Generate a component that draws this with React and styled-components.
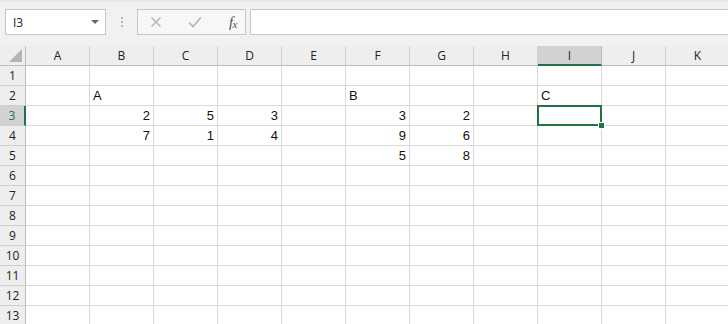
import React from "react";
import styled, { createGlobalStyle } from "styled-components";

const COLS = ["A", "B", "C", "D", "E", "F", "G", "H", "I", "J", "K"];
const ROWS = 13;
const SEL = { col: "I", row: 3 };

const DATA = {
  B2: { v: "A" },
  F2: { v: "B" },
  I2: { v: "C" },
  B3: { v: 2, num: true },
  C3: { v: 5, num: true },
  D3: { v: 3, num: true },
  B4: { v: 7, num: true },
  C4: { v: 1, num: true },
  D4: { v: 4, num: true },
  F3: { v: 3, num: true },
  G3: { v: 2, num: true },
  F4: { v: 9, num: true },
  G4: { v: 6, num: true },
  F5: { v: 5, num: true },
  G5: { v: 8, num: true },
};

const Global = createGlobalStyle`
  html, body {
    margin: 0;
    padding: 0;
    background: #ffffff;
    overflow: hidden;
  }
`;

const Page = styled.div`
  width: 728px;
  height: 324px;
  overflow: hidden;
  font-family: "Open Sans", "Liberation Sans", sans-serif;
`;

const FormulaBar = styled.div`
  height: 46px;
  box-sizing: border-box;
  padding: 9px 0 11px 5px;
  display: flex;
  align-items: stretch;
  background: linear-gradient(#e4e4e4 0, #f1f1f1 3px, #f1f1f1 100%);
`;

const NameBox = styled.div`
  width: 101px;
  box-sizing: border-box;
  background: #fff;
  border: 1px solid #c6c6c6;
  display: flex;
  align-items: center;
  justify-content: space-between;
  padding: 0 6px 0 7px;
  font-size: 12px;
  color: #222;
`;

const Caret = styled.span`
  width: 0;
  height: 0;
  border-left: 4px solid transparent;
  border-right: 4px solid transparent;
  border-top: 4px solid #6a6a6a;
`;

const Grip = styled.div`
  width: 31px;
  display: flex;
  flex-direction: column;
  align-items: center;
  justify-content: center;
  gap: 2px;
  & span {
    width: 2px;
    height: 2px;
    background: #b5b5b5;
  }
`;

const Buttons = styled.div`
  width: 109px;
  box-sizing: border-box;
  background: #f7f7f7;
  border: 1px solid #c6c6c6;
  display: flex;
  align-items: center;
  padding: 0 8px 0 12px;
  justify-content: space-between;
`;

const Fx = styled.span`
  font-family: "Liberation Serif", "DejaVu Serif", serif;
  font-style: italic;
  font-size: 15px;
  color: #555;
  letter-spacing: -0.5px;
  & sub {
    font-size: 11px;
    vertical-align: -1px;
  }
`;

const FormulaInput = styled.div`
  flex: 1;
  margin-left: 4px;
  background: #fff;
  border: 1px solid #c6c6c6;
  border-right: none;
`;

const Grid = styled.div`
  display: grid;
  grid-template-columns: 26px repeat(${COLS.length}, 64px);
  grid-auto-rows: 20px;
`;

const Corner = styled.div`
  background: #eeeeee;
  border-right: 1px solid #bfbfbf;
  border-bottom: 1px solid #bfbfbf;
  box-sizing: border-box;
  display: flex;
  align-items: flex-end;
  justify-content: flex-end;
  padding: 0 3px 3px 0;
`;

const ColHead = styled.div`
  box-sizing: border-box;
  background: ${(p) => (p.$sel ? "#d2d2d2" : "#eeeeee")};
  border-right: 1px solid ${(p) => (p.$sel ? "#bdbdbd" : "#d0d0d0")};
  border-bottom: ${(p) => (p.$sel ? "2px solid #217346" : "1px solid #bfbfbf")};
  display: flex;
  align-items: center;
  justify-content: center;
  font-size: 12px;
  color: #222;
  padding-top: ${(p) => (p.$sel ? "1px" : "0")};
`;

const RowHead = styled.div`
  box-sizing: border-box;
  background: ${(p) => (p.$sel ? "#d2d2d2" : "#eeeeee")};
  border-right: ${(p) => (p.$sel ? "2px solid #217346" : "1px solid #bfbfbf")};
  border-bottom: 1px solid #d0d0d0;
  display: flex;
  align-items: center;
  justify-content: center;
  font-size: 12px;
  color: ${(p) => (p.$sel ? "#217346" : "#222")};
`;

const Cell = styled.div`
  position: relative;
  box-sizing: border-box;
  border-right: 1px solid #d9d9d9;
  border-bottom: 1px solid #d9d9d9;
  font-family: "Liberation Sans", "Open Sans", sans-serif;
  font-size: 13px;
  color: #111;
  display: flex;
  align-items: flex-end;
  justify-content: ${(p) => (p.$num ? "flex-end" : "flex-start")};
  padding: 0 3px 2px 3px;
  ${(p) =>
    p.$sel &&
    `
    &::after {
      content: "";
      position: absolute;
      left: -1px;
      top: -1px;
      right: -1px;
      bottom: -1px;
      border: 2px solid #217346;
    }
    &::before {
      content: "";
      position: absolute;
      right: -4px;
      bottom: -4px;
      width: 5px;
      height: 5px;
      background: #217346;
      border: 1px solid #fff;
      z-index: 2;
    }
  `}
`;

export default function App() {
  const rows = Array.from({ length: ROWS }, (_, i) => i + 1);
  return (
    <Page>
      <Global />
      <FormulaBar>
        <NameBox>
          <span>I3</span>
          <Caret />
        </NameBox>
        <Grip>
          <span />
          <span />
          <span />
        </Grip>
        <Buttons>
          <svg width="12" height="12" viewBox="0 0 12 12">
            <path d="M1.5 1.5 L10.5 10.5 M10.5 1.5 L1.5 10.5" stroke="#b4b4b4" strokeWidth="1.4" fill="none" />
          </svg>
          <svg width="14" height="12" viewBox="0 0 14 12">
            <path d="M1 6.5 L5 10.5 L13 1.5" stroke="#b4b4b4" strokeWidth="1.6" fill="none" />
          </svg>
          <Fx>
            f<sub>x</sub>
          </Fx>
        </Buttons>
        <FormulaInput />
      </FormulaBar>
      <Grid>
        <Corner>
          <svg width="13" height="13" viewBox="0 0 13 13">
            <path d="M13 0 L13 13 L0 13 Z" fill="#b4b4b4" />
          </svg>
        </Corner>
        {COLS.map((c) => (
          <ColHead key={c} $sel={c === SEL.col}>
            {c}
          </ColHead>
        ))}
        {rows.map((r) => (
          <React.Fragment key={r}>
            <RowHead $sel={r === SEL.row}>{r}</RowHead>
            {COLS.map((c) => {
              const d = DATA[c + r];
              return (
                <Cell key={c} $num={d?.num} $sel={c === SEL.col && r === SEL.row}>
                  {d ? d.v : null}
                </Cell>
              );
            })}
          </React.Fragment>
        ))}
      </Grid>
    </Page>
  );
}
